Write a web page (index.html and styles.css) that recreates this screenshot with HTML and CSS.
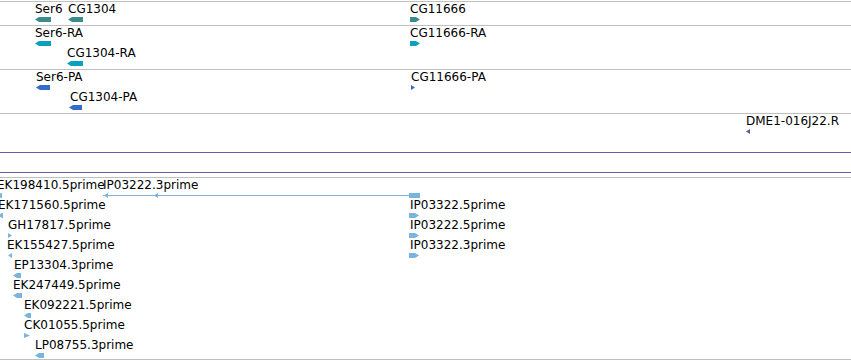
FILE: index.html
```html
<!DOCTYPE html>
<html>
  <head>
    <title>Annotation view</title>
    <link rel="stylesheet" href="styles.css">
  </head>
  <body>
    <div class="view">
      <div class="tier tier-1">
        <div class="row">
          <div class="feat" style="left:35px"><div class="label">Ser6</div><div class="glyph gene minus" style="width:16px"></div></div>
          <div class="feat" style="left:68px"><div class="label">CG1304</div><div class="glyph gene minus" style="width:15px"></div></div>
          <div class="feat" style="left:410px"><div class="label">CG11666</div><div class="glyph gene plus" style="width:10px"></div></div>
        </div>
      </div>
      <div class="tier tier-2">
        <div class="row">
          <div class="feat" style="left:35px"><div class="label">Ser6-RA</div><div class="glyph mrna minus" style="width:16px"></div></div>
          <div class="feat" style="left:410px"><div class="label">CG11666-RA</div><div class="glyph mrna plus" style="width:10px"></div></div>
        </div>
        <div class="row">
          <div class="feat" style="left:67px"><div class="label">CG1304-RA</div><div class="glyph mrna minus" style="width:16px"></div></div>
        </div>
      </div>
      <div class="tier tier-2">
        <div class="row">
          <div class="feat" style="left:36px"><div class="label">Ser6-PA</div><div class="glyph prot minus" style="width:14px"></div></div>
          <div class="feat" style="left:411px"><div class="label">CG11666-PA</div><div class="glyph prot tri-plus" style="width:4px"></div></div>
        </div>
        <div class="row">
          <div class="feat" style="left:69px"><div class="label label-shift">CG1304-PA</div><div class="glyph prot minus" style="width:13px"></div></div>
        </div>
      </div>
      <div class="tier tier-4">
        <div class="row">
          <div class="feat" style="left:746px"><div class="label">DME1-016J22.R</div><div class="glyph clone tri-minus" style="width:4px"></div></div>
        </div>
      </div>
      <div class="divider"></div>
      <div class="tier tier-est">
        <div class="row">
          <div class="feat" style="left:-3px"><div class="label">EK198410.5prime</div><div class="glyph est minus" style="width:5px"></div></div>
          <div class="feat" style="left:103px">
            <div class="label">IP03222.3prime</div>
            <svg class="spliced" width="318" height="5" viewBox="0 0 318 5">
              <line x1="0" y1="2.5" x2="308" y2="2.5" stroke="#7ab4dc" stroke-width="1"/>
              <polygon points="1,2.5 5,0 5,5" fill="#7ab4dc"/>
              <polygon points="51,2.5 55,0 55,5" fill="#7ab4dc"/>
              <rect x="306" y="0" width="11" height="5" fill="#7ab4dc"/>
            </svg>
          </div>
        </div>
        <div class="row">
          <div class="feat" style="left:-2px"><div class="label">EK171560.5prime</div><div class="glyph est minus" style="width:5px"></div></div>
          <div class="feat" style="left:409px"><div class="label label-shift">IP03322.5prime</div><div class="glyph est plus" style="width:10px"></div></div>
        </div>
        <div class="row">
          <div class="feat" style="left:8px"><div class="label">GH17817.5prime</div><div class="glyph est tri-plus" style="width:4px"></div></div>
          <div class="feat" style="left:409px"><div class="label label-shift">IP03222.5prime</div><div class="glyph est plus" style="width:10px"></div></div>
        </div>
        <div class="row">
          <div class="feat" style="left:7px"><div class="label">EK155427.5prime</div><div class="glyph glyph-shift est tri-minus" style="width:4px"></div></div>
          <div class="feat" style="left:409px"><div class="label label-shift">IP03322.3prime</div><div class="glyph est plus" style="width:10px"></div></div>
        </div>
        <div class="row">
          <div class="feat" style="left:13px"><div class="label label-shift">EP13304.3prime</div><div class="glyph est minus" style="width:8px"></div></div>
        </div>
        <div class="row">
          <div class="feat" style="left:13px"><div class="label">EK247449.5prime</div><div class="glyph est minus" style="width:9px"></div></div>
        </div>
        <div class="row">
          <div class="feat" style="left:24px"><div class="label">EK092221.5prime</div><div class="glyph est minus" style="width:7px"></div></div>
        </div>
        <div class="row">
          <div class="feat" style="left:24px"><div class="label">CK01055.5prime</div><div class="glyph est tri-plus" style="width:6px"></div></div>
        </div>
        <div class="row">
          <div class="feat" style="left:35px"><div class="label">LP08755.3prime</div><div class="glyph est minus" style="width:9px"></div></div>
        </div>
      </div>
    </div>
  </body>
</html>
```
FILE: styles.css
```css
body {
  margin: 0;
  width: 851px;
  height: 360px;
  overflow: hidden;
  background: #ffffff;
  font-family: "DejaVu Sans", sans-serif;
  font-size: 12px;
  color: #000000;
}

.view {
  padding-top: 1px;
  display: flex;
  flex-direction: column;
}

.tier {
  border-top: 1px solid #c0c0c0;
  overflow: hidden;
  position: relative;
}

.tier-1 {
  height: 23px;
}

.tier-2 {
  height: 43px;
}

.tier-4 {
  height: 38px;
}

.divider {
  height: 19px;
  border-top: 1px solid #6a5ca6;
  border-bottom: 1px solid #6a5ca6;
  margin-bottom: 4px;
}

.tier-est {
  height: 181px;
  border-bottom: 1px solid #c0c0c0;
}

.row {
  position: relative;
  height: 20px;
}

.feat {
  position: absolute;
  top: 0;
}

.label {
  line-height: 14px;
  white-space: nowrap;
}

.label-shift {
  margin-left: 1px;
}

.glyph {
  margin-top: 1px;
  height: 5px;
}

.glyph-shift {
  margin-left: 1px;
}

.spliced {
  display: block;
  margin-top: 1px;
}

.glyph.minus {
  clip-path: polygon(0 50%, 4px 0, 100% 0, 100% 100%, 4px 100%);
}

.glyph.plus {
  clip-path: polygon(0 0, calc(100% - 4px) 0, 100% 50%, calc(100% - 4px) 100%, 0 100%);
}

.glyph.tri-minus {
  clip-path: polygon(0 50%, 100% 0, 100% 100%);
}

.glyph.tri-plus {
  clip-path: polygon(0 0, 100% 50%, 0 100%);
}

.gene {
  background: #3b8b8d;
}

.mrna {
  background: #0aa0bf;
}

.prot {
  background: #356bcb;
}

.clone {
  background: #6a4fab;
}

.est {
  background: #7ab4dc;
}
```
